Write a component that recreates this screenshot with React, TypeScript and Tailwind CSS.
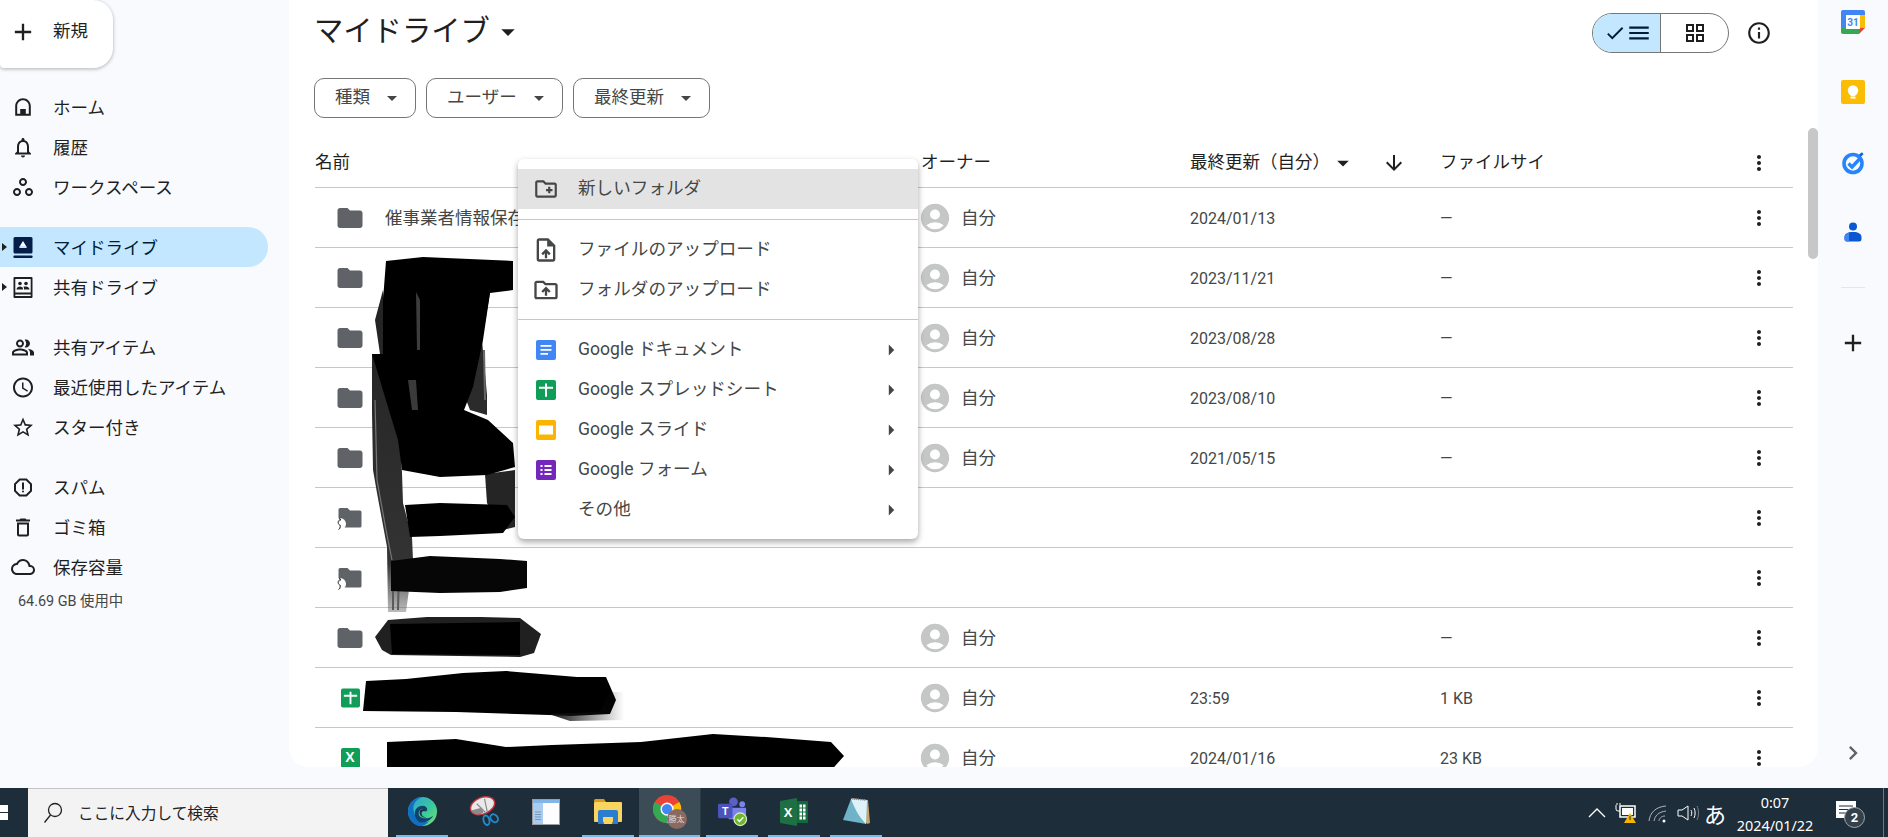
import type { ReactNode } from "react";
import {
  MdAccessTime,
  MdAccountCircle,
  MdAdd,
  MdArrowDownward,
  MdArrowDropDown,
  MdArrowRight,
  MdCheck,
  MdChevronRight,
  MdFolder,
  MdMenu,
  MdMoreVert,
  MdOutlineCloud,
  MdOutlineCreateNewFolder,
  MdOutlineDelete,
  MdOutlineDriveFolderUpload,
  MdOutlineGridView,
  MdOutlineInfo,
  MdOutlineNotifications,
  MdOutlinePeopleAlt,
  MdOutlineReport,
  MdOutlineUploadFile,
  MdOutlineWorkspaces,
  MdStarBorder,
} from "react-icons/md";

const HomeIcon = () => (
  <svg viewBox="0 0 24 24" className="w-6 h-6 text-[#1f1f1f]" fill="currentColor">
    <path d="M12 3.200C7.800 3.200 4.200 6.600 4.200 11v9.800h15.600V11c0-4.400-3.600-7.800-7.800-7.800zm5.800 15.600h-3V14H9.200v4.800h-3V11c0-3.300 2.600-5.800 5.800-5.800s5.800 2.500 5.800 5.800z" />
  </svg>
);

const MyDriveIcon = () => (
  <svg viewBox="0 0 24 24" className="w-[25px] h-[25px]">
    <rect x="2.500" y="1.500" width="19" height="16.500" rx="1.500" fill="#041e49" />
    <rect x="2.500" y="20" width="19" height="2.500" rx="0.800" fill="#041e49" />
    <path d="M12 5.500 8 12h8z" fill="#fff" />
    <path d="M8.800 10.500h6.400v2H8.800z" fill="#c2e7ff" />
  </svg>
);

const SharedDriveIcon = () => (
  <svg viewBox="0 0 24 24" className="w-[25px] h-[25px]" fill="#1f1f1f">
    <path d="M3.500 1.500h17a1 1 0 0 1 1 1v19a1 1 0 0 1-1 1h-17a1 1 0 0 1-1-1v-19a1 1 0 0 1 1-1zm.8 1.900v13.600h15.400V3.400zm0 15.500v1.700h15.400v-1.700z" />
    <circle cx="9" cy="8" r="1.800" />
    <circle cx="15" cy="8" r="1.800" />
    <path d="M5.500 14c0-2 2-3 3.500-3s3 .7 3 2.200V14zm7.500 0v-1c0-.7-.2-1.300-.6-1.700.8-.3 1.700-.3 2.600-.3 1.500 0 3.500 1 3.500 3z" />
  </svg>
);

const DocsIcon = () => (
  <svg viewBox="0 0 20 20" className="w-5 h-5">
    <rect width="20" height="20" rx="2" fill="#4285f4" />
    <path d="M4.500 5h11v1.800h-11zm0 4h11v1.800h-11zm0 4h7.500v1.800H4.500z" fill="#fff" />
  </svg>
);

const SheetsIcon = ({ className = "w-5 h-5" }: { className?: string }) => (
  <svg viewBox="0 0 20 20" className={className}>
    <rect width="20" height="20" rx="2" fill="#0f9d58" />
    <path d="M9 3.500h2v3.200h6v2h-6v8H9v-8H3v-2h6z" fill="#fff" />
  </svg>
);

const SlidesIcon = () => (
  <svg viewBox="0 0 20 20" className="w-5 h-5">
    <rect width="20" height="20" rx="2" fill="#fbb400" />
    <rect x="3" y="5.500" width="14" height="9" fill="#fff" />
  </svg>
);

const FormsIcon = () => (
  <svg viewBox="0 0 20 20" className="w-5 h-5">
    <rect width="20" height="20" rx="2" fill="#7627bb" />
    <path d="M4.500 5h2v2h-2zm4 0h7v2h-7zm-4 4h2v2h-2zm4 0h7v2h-7zm-4 4h2v2h-2zm4 0h7v2h-7z" fill="#fff" />
  </svg>
);

const ExcelFileIcon = () => (
  <span className="w-[19px] h-5 rounded-[2px] bg-[#0f9d58] flex items-center justify-center text-white text-[14px] font-bold font-['Liberation_Sans',sans-serif]">
    X
  </span>
);

const ShortcutFolder = () => (
  <svg viewBox="0 0 26 24" className="w-[26px] h-6">
    <path d="M3 2h7.500l2.500 2.500h10a1.500 1.500 0 0 1 1.500 1.500v14a1.500 1.500 0 0 1-1.500 1.500H3A1.500 1.500 0 0 1 1.500 20V3.500A1.500 1.500 0 0 1 3 2z" fill="#5f6368" />
    <circle cx="3" cy="18" r="6" fill="#fff" />
    <path d="M3.500 13.500c-1.500.3-2.500 1.600-2.300 3.300.2 1.300 1 2.200 2.100 2.500M1.500 23.500c1.300-.5 1.800-1.800 1.800-4.200" fill="none" stroke="#1f1f1f" strokeWidth="1" />
    <path d="M2.200 12.300l1.800 1.200-1.500 1.400" fill="none" stroke="#1f1f1f" strokeWidth="1" />
  </svg>
);

const CalendarIcon = () => (
  <svg viewBox="0 0 24 24" className="w-6 h-6">
    <path d="M2 0h20a2 2 0 0 1 2 2v4H0V2a2 2 0 0 1 2-2z" fill="#4285f4" />
    <rect x="0" y="5" width="5" height="14" fill="#4285f4" />
    <rect x="19" y="5" width="5" height="13" fill="#fbbc04" />
    <path d="M0 18h18v6H2a2 2 0 0 1-2-2z" fill="#34a853" />
    <path d="M18 18h6l-6 6z" fill="#ea4335" />
    <rect x="5" y="5" width="14" height="14" fill="#fff" />
    <text x="12" y="16" textAnchor="middle" fontSize="10" fontWeight="700" fill="#4285f4" fontFamily="Roboto, sans-serif">31</text>
  </svg>
);

const KeepIcon = () => (
  <svg viewBox="0 0 24 24" className="w-6 h-6">
    <rect width="24" height="24" rx="2" fill="#fbbc04" />
    <circle cx="12" cy="10.500" r="5.200" fill="#fff" />
    <rect x="9.700" y="14" width="4.600" height="2.500" fill="#fff" />
    <rect x="9.500" y="17" width="5" height="1.600" fill="#fff" />
  </svg>
);

const TasksIcon = () => (
  <svg viewBox="0 0 24 24" className="w-6 h-6">
    <circle cx="12" cy="12.500" r="9" fill="none" stroke="#2684fc" strokeWidth="3.600" />
    <path d="M7.500 12.500l3.500 3.500 8.500-9" fill="none" stroke="#2684fc" strokeWidth="3.400" />
    <path d="M18 3.500l3-2.300 1.500 2-2.800 2.500z" fill="#0f5fd7" />
  </svg>
);

const ContactsIcon = () => (
  <svg viewBox="0 0 24 24" className="w-6 h-6">
    <circle cx="12" cy="6.500" r="4" fill="#0b57d0" />
    <path d="M3.500 19v-2c0-3 3-5 8.500-5s8.500 2 8.500 5v2a2.500 2.500 0 0 1-2.500 2.500H6A2.500 2.500 0 0 1 3.500 19z" fill="#0b57d0" />
    <path d="M3.500 17c0-2 1.500-3.700 4.500-4.500v9H6A2.500 2.500 0 0 1 3.500 19z" fill="#4285f4" />
  </svg>
);

const EdgeIcon = () => (
  <svg viewBox="0 0 32 32" className="w-[31px] h-[31px]">
    <defs>
      <linearGradient id="edge-a" x1="0" y1="0" x2="1" y2="1">
        <stop offset="0" stopColor="#2f9fd8" />
        <stop offset="0.6" stopColor="#3ccb9a" />
        <stop offset="1" stopColor="#7fe06a" />
      </linearGradient>
    </defs>
    <circle cx="16" cy="16" r="15" fill="url(#edge-a)" />
    <path d="M1 16C1 8 8 1 16 1c-6 2-11 7-9 15 1 7 8 13 16 10-3 3-6 5-9 5C7 31 1 24 1 16z" fill="#0f6fc4" />
    <path d="M13 27c-3-2-5-5-5-9 0-5 4-8 8-8 3 0 5 2 5 4 0 1-1 2-2 2-2 0-1-2-4-2-2 0-3 2-3 4 0 3 3 5 7 5 3 0 6-1 8-3-2 5-8 8-14 7z" fill="#10436e" />
    <path d="M13 17c0-2 1-3 3-3 2 0 2 1 3 2-2-1-4 0-4 2s2 4 5 4c-4 1-7-2-7-5z" fill="#1c2c38" />
  </svg>
);

const SnipIcon = () => (
  <svg viewBox="0 0 32 32" className="w-[31px] h-[31px]">
    <ellipse cx="14" cy="10" rx="13" ry="8.500" fill="#e9e9e9" stroke="#c0353c" strokeWidth="1.500" transform="rotate(-22 14 10)" />
    <path d="M2 15c3 5 9 5 13 2l-2-5z" fill="#8b8b8b" />
    <path d="M16 3l3 14M8 8l9 9" stroke="#8a8a8a" strokeWidth="1.200" />
    <ellipse cx="18" cy="25" rx="3" ry="5" fill="none" stroke="#2488c9" strokeWidth="2" transform="rotate(-15 18 25)" />
    <ellipse cx="26" cy="23" rx="3.500" ry="4.500" fill="none" stroke="#2488c9" strokeWidth="2" transform="rotate(-40 26 23)" />
  </svg>
);

const WindowIcon = () => (
  <svg viewBox="0 0 28 26" className="w-[28px] h-[26px]">
    <rect x="0.500" y="0.500" width="27" height="25" fill="#fdfdff" stroke="#9b9ba0" />
    <rect x="1" y="1" width="26" height="3" fill="#83b6e8" />
    <rect x="1" y="4" width="10" height="21" fill="#a9ccf0" />
    <path d="M3 13h6M3 15.500h6M3 18h6M3 20.500h6" stroke="#7a97b5" strokeWidth="1" />
  </svg>
);

const ExplorerIcon = () => (
  <svg viewBox="0 0 28 26" className="w-[28px] h-[26px]">
    <path d="M0 1.500A1.500 1.500 0 0 1 1.500 0H10l2 3H0z" fill="#d89c1f" />
    <rect x="0" y="3" width="28" height="20" rx="1" fill="#f9d45f" />
    <path d="M4 25V13a2 2 0 0 1 2-2h16a2 2 0 0 1 2 2v12h-5v-7H9v7z" fill="#2a7dd1" />
    <rect x="9.500" y="18" width="9" height="7" fill="#f9d45f" />
  </svg>
);

const ChromeIcon = () => (
  <div className="relative w-[34px] h-[34px]">
    <svg viewBox="0 0 32 32" className="w-[30px] h-[30px]">
      <circle cx="15" cy="15" r="15" fill="#ea4335" />
      <path d="M15 15 2 7.500A15 15 0 0 0 15 30z" fill="#34a853" />
      <path d="M15 15V30A15 15 0 0 0 28 7.500z" fill="#fbbc04" />
      <circle cx="15" cy="15" r="7" fill="#fff" />
      <circle cx="15" cy="15" r="5.500" fill="#4285f4" />
    </svg>
    <span className="absolute right-0 bottom-0 w-[20px] h-[20px] rounded-full bg-[#8a6a60] flex items-center justify-center text-[8px] leading-none text-[#e5dcd8] font-['Noto_Sans_CJK_JP',sans-serif]">
      勝太
    </span>
  </div>
);

const TeamsIcon = () => (
  <svg viewBox="0 0 32 32" className="w-[31px] h-[31px]">
    <circle cx="17" cy="6" r="4.500" fill="#5b5fc7" />
    <circle cx="26" cy="8.500" r="3" fill="#7b83eb" />
    <path d="M12 12h18v9a6 6 0 0 1-12 3h-6z" fill="#7b83eb" />
    <rect x="1" y="8" width="15" height="15" rx="1.500" fill="#4b53bc" />
    <text x="8.500" y="20" textAnchor="middle" fontSize="11" fontWeight="700" fill="#fff" fontFamily="Liberation Sans, sans-serif">T</text>
    <circle cx="24" cy="24" r="6.500" fill="#6bb82f" stroke="#dce8d0" strokeWidth="1.200" />
    <path d="M21 24l2.200 2.300 4-4.300" fill="none" stroke="#fff" strokeWidth="1.600" />
  </svg>
);

const ExcelIcon = () => (
  <svg viewBox="0 0 28 28" className="w-[28px] h-[28px]">
    <path d="M0 3 17 0v28L0 25z" fill="#1d7044" />
    <rect x="17" y="3" width="11" height="22" fill="#11693a" />
    <path d="M19 6h7v16h-7zM19 10h7M19 14h7M19 18h7M22.500 6v16" fill="#fff" stroke="#1d7044" strokeWidth="1" />
    <text x="8" y="19" textAnchor="middle" fontSize="13" fontWeight="700" fill="#fff" fontFamily="Liberation Sans, sans-serif">X</text>
  </svg>
);

const NotepadIcon = () => (
  <svg viewBox="0 0 30 30" className="w-[30px] h-[30px]">
    <path d="M10 1 27 3l2 23-3 1z" fill="#c9a66b" />
    <path d="M10 2 26 3.500 25 27 2 23z" fill="#6fb3c9" />
    <path d="M10 2 26 3.500 25 27C18 20 14 12 10 2z" fill="#dff2f7" />
    <path d="M11 2l14 1" stroke="#8a8f96" strokeWidth="1.500" strokeDasharray="1 1" />
  </svg>
);

const Scribbles = () => (
  <svg viewBox="289 0 1529 767" className="absolute left-0 top-0 w-[1529px] h-[767px] pointer-events-none">
    <defs>
      <linearGradient id="fade-tail" x1="0" y1="0" x2="1" y2="0">
        <stop offset="0" stopColor="#111" />
        <stop offset="1" stopColor="#111" stopOpacity="0" />
      </linearGradient>
      <linearGradient id="fade-down" x1="0" y1="0" x2="0" y2="1">
        <stop offset="0" stopColor="#222" />
        <stop offset="0.85" stopColor="#333" />
        <stop offset="1" stopColor="#555" stopOpacity="0.4" />
      </linearGradient>
    </defs>
    {/* long strokes, gray at the edges */}
    <path d="M383 290 375 320 380 354 372 354 372 413 373 470 377 493 387 547 388 612 406 612 413 560 412 537 403 503 402 473 400 440z" fill="url(#fade-down)" />
    <path d="M487 293 490 293 482 340 487 395 487 415 470 410 452 363z" fill="#2b2b2b" />
    <path d="M485 474 515 470 515 527 503 530 487 503z" fill="#252525" />
    <path d="M375 400 377 480 386 530 392 560" stroke="#777" strokeWidth="1.200" fill="none" />
    <path d="M453 365 458 392M460 368 463 395M484 350 485 400" stroke="#666" strokeWidth="2" fill="none" />
    <path d="M393 565 393 610M399 570 398 610" stroke="#5a5a5a" strokeWidth="2" fill="none" />
    {/* upper block */}
    <path d="M386 261 423 257 513 261 513 290 490 293 483 340 473 387 464 410 488 420 513 443 515 467 487 475 440 477 402 470 398 440 372 354 383 354 383 300z" fill="#000" />
    <path d="M416 292 420 300 420 350 417 350z" fill="#3d3d3d" />
    <path d="M408 380 416 380 418 410 412 410z" fill="#3a3a3a" />
    {/* row blocks */}
    <path d="M405 505 440 503 507 505 515 517 503 533 440 536 410 537z" fill="#000" />
    <path d="M391 561 430 556 500 559 527 561 527 588 500 592 440 593 391 591z" fill="#060606" />
    <path d="M375 637 388 620 427 617 481 617 520 618 541 634 534 653 520 657 391 655 382 650z" fill="#202020" />
    <path d="M390 624 520 622 520 655 392 654z" fill="#000" />
    <path d="M366 681 406 679 463 673 506 671 577 677 606 677 616 700 610 714 570 716 549 715 456 712 363 711z" fill="#000" />
    <path d="M610 692 624 692 624 720 570 721 549 714 600 712z" fill="url(#fade-tail)" />
    <path d="M387 742 456 739 506 747 552 745 641 742 713 734 766 737 831 742 844 756 827 775 387 775z" fill="#000" />
  </svg>
);

const NavItem = ({
  icon,
  label,
  active,
  caret,
}: {
  icon: ReactNode;
  label: string;
  active?: boolean;
  caret?: boolean;
}) => (
  <div className={`flex items-center h-10 w-[268px] rounded-r-full ${active ? "bg-[#c2e7ff]" : ""}`}>
    <span className="w-[11px] pl-[2px] flex items-center">
      {caret && <span className="w-0 h-0 border-y-[4px] border-y-transparent border-l-[5px] border-l-[#1f1f1f]" />}
    </span>
    <span className="w-6 h-6 flex items-center justify-center text-[#1f1f1f] shrink-0">{icon}</span>
    <span className={`ml-[18px] pt-[4px] text-[17.5px] leading-none ${active ? "text-[#001d35]" : "text-[#1f1f1f]"}`}>{label}</span>
  </div>
);

const FilterChip = ({ label, width }: { label: string; width: string }) => (
  <div className={`h-10 ${width} rounded-[10px] border border-[#747775] flex items-center pl-[20px] text-[#444746] text-[17.5px]`}>
    <span className="flex-1 leading-none">{label}</span>
    <MdArrowDropDown className="mr-[11px] text-[#444746]" size={24} />
  </div>
);

type Row = {
  icon: ReactNode;
  name?: string;
  owner?: boolean;
  date?: string;
  size?: string;
};

const folder = <MdFolder size={30} className="text-[#5f6368]" />;

const rows: Row[] = [
  { icon: folder, name: "催事業者情報保存先", owner: true, date: "2024/01/13", size: "—" },
  { icon: folder, owner: true, date: "2023/11/21", size: "—" },
  { icon: folder, owner: true, date: "2023/08/28", size: "—" },
  { icon: folder, owner: true, date: "2023/08/10", size: "—" },
  { icon: folder, owner: true, date: "2021/05/15", size: "—" },
  { icon: <ShortcutFolder /> },
  { icon: <ShortcutFolder /> },
  { icon: folder, owner: true, size: "—" },
  { icon: <SheetsIcon className="w-[19px] h-5" />, owner: true, date: "23:59", size: "1 KB" },
  { icon: <ExcelFileIcon />, owner: true, date: "2024/01/16", size: "23 KB" },
];

const MenuRow = ({
  icon,
  label,
  arrow,
  active,
}: {
  icon?: ReactNode;
  label: string;
  arrow?: boolean;
  active?: boolean;
}) => (
  <div className={`h-10 flex items-center ${active ? "bg-[#e3e3e3]" : ""}`}>
    <span className="w-[60px] pr-[4px] flex items-center justify-center shrink-0 text-[#444746]">{icon}</span>
    <span className="text-[17.6px] leading-none text-[#444746]">{label}</span>
    {arrow && <MdArrowRight size={26} className="ml-auto mr-[14px] text-[#444746]" />}
  </div>
);

const TaskTile = ({ children, line, active }: { children?: ReactNode; line?: boolean; active?: boolean }) => (
  <div className={`w-[62px] h-full flex flex-col ${active ? "bg-[#3c4c57] border-r border-r-[#2c3a44]" : ""}`}>
    <div className="flex-1 flex items-center justify-center">{children}</div>
    <div className={`h-[2px] ${active ? "" : "mx-[5px]"} ${line ? "bg-[#76b9ed]" : ""}`} />
  </div>
);

export default function App() {
  return (
    <div className="w-[1888px] h-[837px] overflow-hidden flex flex-col bg-[#f8fafd] font-['Roboto','Noto_Sans_CJK_JP',sans-serif]">
      <div className="h-[788px] flex shrink-0">
        {/* Sidebar */}
        <aside className="w-[289px] shrink-0">
          <div className="w-[113px] h-[68px] bg-white rounded-r-[20px] rounded-bl-[4px] shadow-[0_1px_3px_1px_rgba(60,64,67,0.25)] flex items-center pl-[9px] pb-[4px]">
            <MdAdd size={28} className="text-[#1f1f1f]" />
            <span className="ml-[16px] text-[17.5px] text-[#1f1f1f] leading-none">新規</span>
          </div>
          <div className="mt-[19px] flex flex-col">
            <NavItem icon={<HomeIcon />} label="ホーム" />
            <NavItem icon={<MdOutlineNotifications size={25} />} label="履歴" />
            <NavItem icon={<MdOutlineWorkspaces size={24} />} label="ワークスペース" />
          </div>
          <div className="mt-5 flex flex-col">
            <NavItem icon={<MyDriveIcon />} label="マイドライブ" active caret />
            <NavItem icon={<SharedDriveIcon />} label="共有ドライブ" caret />
          </div>
          <div className="mt-5 flex flex-col">
            <NavItem icon={<MdOutlinePeopleAlt size={25} />} label="共有アイテム" />
            <NavItem icon={<MdAccessTime size={25} />} label="最近使用したアイテム" />
            <NavItem icon={<MdStarBorder size={25} />} label="スター付き" />
          </div>
          <div className="mt-5 flex flex-col">
            <NavItem icon={<MdOutlineReport size={25} />} label="スパム" />
            <NavItem icon={<MdOutlineDelete size={25} />} label="ゴミ箱" />
            <NavItem icon={<MdOutlineCloud size={26} />} label="保存容量" />
          </div>
          <div className="mt-[5px] pl-[18px] h-5 flex items-center text-[14.4px] text-[#444746]">64.69 GB 使用中</div>
        </aside>

        {/* Main panel */}
        <main className="relative w-[1529px] h-[767px] bg-white rounded-[20px] rounded-t-none overflow-hidden pl-[26px] pr-[25px]">
          <div className="h-16 flex items-center justify-between">
            <div className="flex items-center -ml-px">
              <h1 className="text-[29.3px] font-normal leading-none text-[#1f1f1f]">マイドライブ</h1>
              <MdArrowDropDown size={32} className="ml-[2px] text-[#1f1f1f]" />
            </div>
            <div className="flex items-center mt-[2px] mr-[21px]">
              <div className="h-10 w-[137px] rounded-full border border-[#747775] flex overflow-hidden">
                <div className="w-[68px] bg-[#c2e7ff] border-r border-r-[#747775] flex items-center justify-center pl-[3px] text-[#001d35]">
                  <MdCheck size={22} />
                  <MdMenu size={26} />
                </div>
                <div className="flex-1 flex items-center justify-center text-[#1f1f1f]">
                  <MdOutlineGridView size={24} />
                </div>
              </div>
              <MdOutlineInfo size={26} className="ml-[17px] text-[#1f1f1f]" />
            </div>
          </div>

          <div className="mt-[14px] -ml-px flex gap-[10px]">
            <FilterChip label="種類" width="w-[102px]" />
            <FilterChip label="ユーザー" width="w-[137px]" />
            <FilterChip label="最終更新" width="w-[137px]" />
          </div>

          {/* Table header */}
          <div className="h-[70px] pt-[20px] flex items-center border-b border-b-[#c7c7c7] text-[17.5px] text-[#1f1f1f]">
            <div className="w-[606px]">名前</div>
            <div className="w-[269px]">オーナー</div>
            <div className="w-[250px] flex items-center whitespace-nowrap">
              最終更新（自分）
              <MdArrowDropDown size={28} className="ml-[-1px]" />
              <MdArrowDownward size={24} className="ml-[25px]" />
            </div>
            <div className="w-[285px] whitespace-nowrap overflow-hidden">ファイルサイ</div>
            <div className="w-[68px] flex justify-center">
              <MdMoreVert size={24} />
            </div>
          </div>

          {/* Rows */}
          {rows.map((row, i) => (
            <div key={i} className="h-[60px] shrink-0 flex items-center border-b border-b-[#c7c7c7] text-[#444746]">
              <div className="w-[606px] flex items-center">
                <span className="w-[70px] flex justify-center">{row.icon}</span>
                <span className="pt-[2px] text-[17.5px] leading-none whitespace-nowrap">{row.name}</span>
              </div>
              <div className="w-[269px] flex items-center">
                {row.owner && (
                  <>
                    <MdAccountCircle size={34} className="ml-[-3px] text-[#c4c7c5]" />
                    <span className="ml-[9px] pt-[2px] text-[17.5px] leading-none">自分</span>
                  </>
                )}
              </div>
              <div className="w-[250px] pt-[2px] text-[16px]">{row.date}</div>
              <div className="w-[285px] pt-[2px] text-[16px]">{row.size}</div>
              <div className="w-[68px] flex justify-center text-[#1f1f1f]">
                <MdMoreVert size={24} />
              </div>
            </div>
          ))}

          <Scribbles />

          {/* Scrollbar */}
          <div className="absolute left-[1519px] top-[128px] w-[10px] h-[131px] rounded-full bg-[#c7c7c7]" />

          {/* New menu */}
          <div className="absolute left-[229px] top-[159px] w-[400px] h-[380px] bg-white rounded-[6px] shadow-[0_3px_6px_rgba(0,0,0,0.35)] py-[10px]">
            <MenuRow icon={<MdOutlineCreateNewFolder size={26} />} label="新しいフォルダ" active />
            <div className="my-[10px] border-t border-t-[#c7c7c7]" />
            <MenuRow icon={<MdOutlineUploadFile size={28} />} label="ファイルのアップロード" />
            <MenuRow icon={<MdOutlineDriveFolderUpload size={28} />} label="フォルダのアップロード" />
            <div className="mt-[9px] mb-[10px] border-t border-t-[#c7c7c7]" />
            <MenuRow icon={<DocsIcon />} label="Google ドキュメント" arrow />
            <MenuRow icon={<SheetsIcon />} label="Google スプレッドシート" arrow />
            <MenuRow icon={<SlidesIcon />} label="Google スライド" arrow />
            <MenuRow icon={<FormsIcon />} label="Google フォーム" arrow />
            <MenuRow label="その他" arrow />
          </div>
        </main>

        {/* Right rail */}
        <aside className="w-[70px] shrink-0 flex flex-col items-center">
          <div className="mt-[10px] h-6"><CalendarIcon /></div>
          <div className="mt-[46px] h-6"><KeepIcon /></div>
          <div className="mt-[47px] h-6"><TasksIcon /></div>
          <div className="mt-[45px] h-6"><ContactsIcon /></div>
          <div className="mt-[43px] w-6 border-t border-t-[#e3e6ea]" />
          <MdAdd size={28} className="mt-[41px] text-[#1f1f1f]" />
          <MdChevronRight size={28} className="mt-auto mb-[21px] text-[#5f6368]" />
        </aside>
      </div>

      {/* Taskbar */}
      <div className="h-[49px] shrink-0 bg-[#1d2d3a] flex items-stretch text-white">
        <div className="w-[28px] flex flex-col justify-center gap-[1px]">
          <span className="w-[8px] h-[7px] bg-white" />
          <span className="w-[8px] h-[7px] bg-white" />
        </div>
        <div className="w-[360px] bg-[#f3f3f3] border-t border-t-[#c4c4c4] flex items-center pl-[13px]">
          <svg viewBox="0 0 24 24" className="w-[24px] h-[24px]" fill="none" stroke="#222" strokeWidth="1.300">
            <circle cx="14" cy="9" r="6.500" />
            <path d="M9.500 14 3.500 21.500" />
          </svg>
          <span className="ml-[13px] text-[15.7px] leading-none text-[#222] font-['Noto_Sans_CJK_JP',sans-serif]">ここに入力して検索</span>
        </div>
        <div className="ml-[3px] flex items-stretch">
          <TaskTile line><EdgeIcon /></TaskTile>
          <TaskTile><SnipIcon /></TaskTile>
          <TaskTile><WindowIcon /></TaskTile>
          <TaskTile line><ExplorerIcon /></TaskTile>
          <TaskTile line active><ChromeIcon /></TaskTile>
          <TaskTile line><TeamsIcon /></TaskTile>
          <TaskTile line><ExcelIcon /></TaskTile>
          <TaskTile line><NotepadIcon /></TaskTile>
        </div>
        <div className="ml-auto flex items-center">
          <div className="w-[30px] flex justify-center">
            <svg viewBox="0 0 24 24" className="w-[24px] h-[24px]" fill="none" stroke="#fff" strokeWidth="1.300">
              <path d="M4 16l8-8 8 8" />
            </svg>
          </div>
          <div className="w-[30px] flex justify-center">
            <svg viewBox="0 0 24 24" className="w-[24px] h-[24px]">
              <path d="M1 4v4a2 2 0 0 0 2 2h2M2 2v2M5 2v2" stroke="#fff" strokeWidth="1" fill="none" />
              <path d="M5 5h15v11H5z" fill="none" stroke="#fff" strokeWidth="1.500" />
              <rect x="7" y="7" width="11" height="7" fill="#fff" />
              <path d="M15 12l6 10H9z" fill="#f5b400" />
              <rect x="14.500" y="15" width="1" height="4" fill="#1d2d3a" />
            </svg>
          </div>
          <div className="w-[31px] flex justify-center">
            <svg viewBox="0 0 24 24" className="w-[24px] h-[24px]" fill="none" stroke="#aeb5bb" strokeWidth="1">
              <path d="M3 20C4 12 9 6 20 5M8 20c1-5 4-9 12-10M13 20c0-2 2-5 6-5" />
              <circle cx="18" cy="20" r="1.500" fill="#fff" stroke="none" />
            </svg>
          </div>
          <div className="w-[30px] flex justify-center">
            <svg viewBox="0 0 24 24" className="w-[24px] h-[24px]" fill="none" stroke="#fff" strokeWidth="1">
              <path d="M2 9h4l6-4v14l-6-4H2z" />
              <path d="M15 9c1 2 1 4 0 6M18 7c1.500 3 1.500 7 0 10" />
              <path d="M21 5c2 4 2 10 0 14" stroke="#7a858e" />
            </svg>
          </div>
          <div className="w-[24px] text-center text-[22px] leading-none font-['Noto_Sans_CJK_JP',sans-serif]">あ</div>
          <div className="w-[96px] flex flex-col items-center text-[14.4px] leading-[23px] font-['Noto_Sans',sans-serif] mt-[2px]">
            <span>0:07</span>
            <span>2024/01/22</span>
          </div>
          <div className="w-[46px] flex justify-center pl-[2px]">
            <div className="relative w-[24px] h-[28px]">
              <svg viewBox="0 0 22 20" className="w-[22px] h-[20px] mt-[1px]">
                <path d="M1 1h20v17H1z" fill="#fff" />
                <path d="M4 6h14M4 9.500h14M4 13h8" stroke="#1d2d3a" strokeWidth="1" />
              </svg>
              <span className="absolute left-[9px] top-[8px] w-[21px] h-[21px] rounded-full bg-[#33414c] border border-[#a0a8ae] flex items-center justify-center text-[13px] font-bold leading-none">
                2
              </span>
            </div>
          </div>
          <div className="ml-[14px] mr-[4px] w-px h-full bg-[#6c7882]" />
        </div>
      </div>
    </div>
  );
}
